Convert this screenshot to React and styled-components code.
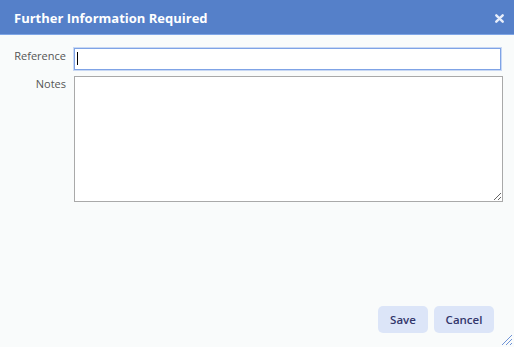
import React from "react";
import styled, { createGlobalStyle } from "styled-components";

const Global = createGlobalStyle`
  html, body { margin: 0; padding: 0; }
  body { background: #f9fbfb; font-family: "Open Sans", "Noto Sans", sans-serif; }
  #root { height: 100vh; }
`;

const Dialog = styled.div`
  position: relative;
  height: 347px;
  display: flex;
  flex-direction: column;
  background: #f9fbfb;
  box-sizing: border-box;
`;

const Header = styled.div`
  height: 34px;
  flex: none;
  background: #5580c9;
  border-bottom: 1px solid #7fa6e6;
  display: flex;
  align-items: center;
  justify-content: space-between;
  padding: 0 10px 0 14px;
`;

const Title = styled.h1`
  margin: 0;
  font-family: "Open Sans", sans-serif;
  font-size: 13px;
  font-weight: 700;
  color: #ffffff;
  position: relative;
  top: 1px;
`;

const Close = styled.button`
  border: none;
  background: transparent;
  padding: 0;
  width: 9px;
  height: 9px;
  display: flex;
  align-items: center;
  justify-content: center;
  cursor: pointer;
  position: relative;
  top: 1px;
`;

const Form = styled.div`
  flex: 1;
  display: grid;
  grid-template-columns: 66px 1fr;
  column-gap: 8px;
  row-gap: 6px;
  align-content: start;
  padding: 13px 11px 0 0;
`;

const Label = styled.label`
  text-align: right;
  font-size: 11px;
  color: #555555;
  line-height: 16px;
`;

const InputWrap = styled.div`
  position: relative;
  margin-right: 2px;
`;

const TextInput = styled.input`
  display: block;
  width: 100%;
  height: 22px;
  box-sizing: border-box;
  border: 1px solid #7fa3e6;
  box-shadow: 0 0 0 1px #c8d8f4;
  background: #ffffff;
  outline: none;
  font-family: inherit;
  font-size: 12px;
  padding: 0 3px;
  caret-color: transparent;
`;

const Caret = styled.span`
  position: absolute;
  left: 3px;
  top: 4px;
  width: 1px;
  height: 13px;
  background: #000;
`;

const Notes = styled.textarea`
  display: block;
  width: 100%;
  height: 126px;
  box-sizing: border-box;
  border: 1px solid #a9a9a9;
  background: #ffffff;
  outline: none;
  margin: 0;
  font-family: inherit;
  font-size: 12px;
`;

const Footer = styled.div`
  display: flex;
  justify-content: flex-end;
  gap: 6px;
  padding: 0 20px 14px 0;
`;

const Button = styled.button`
  height: 27px;
  width: ${(p) => p.$w}px;
  border: none;
  border-radius: 5px;
  background: #dce5f8;
  color: #33366b;
  font-family: "Open Sans", sans-serif;
  font-size: 11.5px;
  font-weight: 600;
  padding: 0;
  cursor: pointer;
`;

const Grip = styled.svg`
  position: absolute;
  right: 1px;
  bottom: 1px;
`;

export default function App() {
  return (
    <>
      <Global />
      <Dialog>
        <Header>
          <Title>Further Information Required</Title>
          <Close aria-label="Close">
            <svg width="9" height="9" viewBox="0 0 9 9">
              <path d="M1.3 1.3 L7.7 7.7 M7.7 1.3 L1.3 7.7" stroke="#e8eefa" strokeWidth="2.4" strokeLinecap="round" />
            </svg>
          </Close>
        </Header>
        <Form>
          <Label>Reference</Label>
          <InputWrap>
            <TextInput type="text" />
            <Caret />
          </InputWrap>
          <Label>Notes</Label>
          <Notes />
        </Form>
        <Footer>
          <Button $w={50}>Save</Button>
          <Button $w={60}>Cancel</Button>
        </Footer>
        <Grip width="12" height="12" viewBox="0 0 12 12">
          <path d="M11 1 L1 11 M11 5 L5 11 M11 9 L9 11" stroke="#6f93d6" strokeWidth="1" />
        </Grip>
      </Dialog>
    </>
  );
}
